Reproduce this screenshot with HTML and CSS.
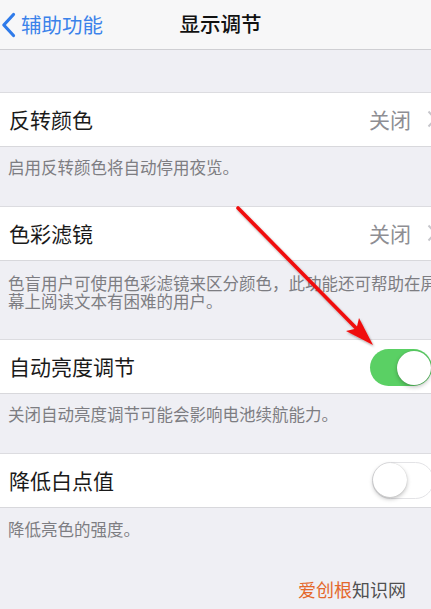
FILE: index.html
```html
<!DOCTYPE html>
<html lang="zh-CN">
<head>
<meta charset="utf-8">
<title>显示调节</title>
<link rel="stylesheet" href="styles.css">
</head>
<body>
<div class="page">
  <header class="nav">
    <div class="back">
      <svg class="back-chev" width="15" height="26" viewBox="0 0 15 26"><path d="M12.5 2.5 L2.8 13 L12.5 23.5" fill="none" stroke="#2f7bea" stroke-width="3.2" stroke-linecap="round" stroke-linejoin="round"/></svg>
      <span>辅助功能</span>
    </div>
    <div class="title">显示调节</div>
  </header>
  <div class="gap-top"></div>

  <div class="row">
    <span class="label">反转颜色</span>
    <span class="value">关闭<svg class="chev" width="10" height="18" viewBox="0 0 10 18"><path d="M1.5 1.5 L8.5 9 L1.5 16.5" fill="none" stroke="#c7c7cc" stroke-width="2"/></svg></span>
  </div>
  <div class="foot f1">启用反转颜色将自动停用夜览。</div>

  <div class="row">
    <span class="label">色彩滤镜</span>
    <span class="value">关闭<svg class="chev" width="10" height="18" viewBox="0 0 10 18"><path d="M1.5 1.5 L8.5 9 L1.5 16.5" fill="none" stroke="#c7c7cc" stroke-width="2"/></svg></span>
  </div>
  <div class="foot f2"><div class="line">色盲用户可使用色彩滤镜来区分颜色，此功能还可帮助在屏</div><div class="line">幕上阅读文本有困难的用户。</div></div>

  <div class="row">
    <span class="label">自动亮度调节</span>
    <span class="switch on"><span class="knob"></span></span>
  </div>
  <div class="foot f3">关闭自动亮度调节可能会影响电池续航能力。</div>

  <div class="row">
    <span class="label">降低白点值</span>
    <span class="switch off"><span class="knob"></span></span>
  </div>
  <div class="foot f4">降低亮色的强度。
    <div class="watermark"><span class="wm-a">爱创根</span><span class="wm-b">知识网</span></div>
  </div>

  <svg class="arrow" width="431" height="609" viewBox="0 0 431 609">
    <defs>
      <filter id="sh" x="-20%" y="-20%" width="140%" height="140%">
        <feDropShadow dx="1" dy="1.5" stdDeviation="1.2" flood-color="#000" flood-opacity="0.35"/>
      </filter>
    </defs>
    <g filter="url(#sh)">
      <line x1="238" y1="208" x2="357" y2="329" stroke="#f01010" stroke-width="3.6" stroke-linecap="round"/>
      <polygon points="373,345 346,331 356.5,328.5 359,318" fill="#f01010"/>
    </g>
  </svg>
</div>
</body>
</html>
```

FILE: styles.css
```css
html, body {
  margin: 0;
  padding: 0;
  background: #efeff4;
}
body {
  font-family: "Noto Sans CJK SC", "Noto Sans", sans-serif;
  width: 431px;
  height: 609px;
  overflow: hidden;
}
.page {
  position: relative;
  width: 431px;
  height: 609px;
  overflow: hidden;
}
.nav {
  height: 49px;
  background: #f7f7f8;
  border-bottom: 1px solid #cfcfd3;
  display: flex;
  align-items: center;
  position: relative;
}
.back {
  display: flex;
  align-items: center;
  color: #3b82ea;
  font-size: 20.5px;
  padding-left: 1px;
  gap: 5px;
}
.back span {
  margin-top: -2px;
}
.title {
  position: absolute;
  left: 0;
  right: 0;
  text-align: center;
  font-size: 20.5px;
  font-weight: 500;
  color: #111;
  padding-left: 10px;
  margin-top: -3px;
}
.gap-top {
  height: 42px;
  border-bottom: 1px solid #dcdce0;
}
.row {
  height: 53px;
  background: #fff;
  border-bottom: 1px solid #d8d8dc;
  display: flex;
  align-items: center;
  justify-content: space-between;
  padding-left: 9px;
  overflow: hidden;
}
.label {
  font-size: 21px;
  color: #1a1a1a;
  margin-top: -2px;
}
.value {
  display: flex;
  align-items: center;
  font-size: 21px;
  color: #8e8e93;
  margin-top: -2px;
  margin-right: -6px;
}
.chev {
  margin-left: 16px;
}
.foot {
  font-size: 16.5px;
  color: #7d7d82;
  padding-left: 8px;
  line-height: 18px;
  border-bottom: 1px solid #dcdce0;
  white-space: nowrap;
  overflow: hidden;
}
.line {
  height: 18px;
}
.f1 { height: 48px; padding-top: 11px; }
.f2 { height: 65px; padding-top: 13px; }
.f3 { height: 48px; padding-top: 11px; }
.f4 { height: 90px; padding-top: 12px; border-bottom: none; position: relative; }
.switch {
  width: 62px;
  height: 37px;
  border-radius: 19px;
  box-sizing: border-box;
  position: relative;
  flex: none;
}
.switch.on {
  background: #5ad064;
  margin-right: -1px;
  margin-top: 2px;
}
.switch.off {
  background: #fff;
  border: 1.5px solid #e3e3e6;
  margin-right: -3px;
  margin-top: 0;
}
.knob {
  position: absolute;
  width: 34px;
  height: 34px;
  border-radius: 50%;
  background: #fff;
  top: 1.5px;
  box-shadow: 0 2px 4px rgba(0,0,0,0.25), 0 0 1px rgba(0,0,0,0.2);
}
.switch.on .knob { right: 1.5px; }
.switch.off .knob { left: 0; top: 0; }
.watermark {
  position: absolute;
  left: 298px;
  top: 70px;
  font-size: 18px;
  line-height: 22px;
  letter-spacing: 0;
}
.wm-a { color: #e4682c; }
.wm-b { color: #505050; }
.arrow {
  position: absolute;
  left: 0;
  top: 0;
  pointer-events: none;
}
```
